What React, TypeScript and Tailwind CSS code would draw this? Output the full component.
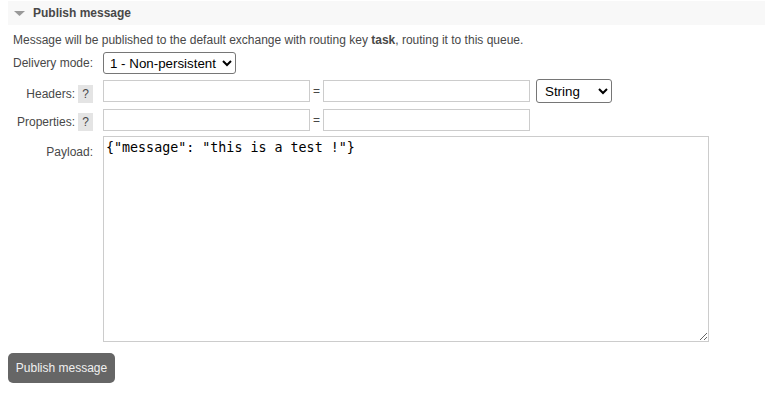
import React from "react";

const font = { fontFamily: '"Liberation Sans", Arial, sans-serif' };

function Help() {
  return (
    <span className="ml-[3px] inline-flex h-[18px] w-[15px] items-center justify-center bg-[#e4e4e4] text-[12px] text-[#484848]">
      ?
    </span>
  );
}

export default function App() {
  return (
    <div className="bg-white pt-px text-[12px] text-[#484848]" style={font}>
      <div className="ml-2 flex h-6 items-center bg-[#f8f8f8]">
        <svg width="11" height="5" viewBox="0 0 11 5" className="ml-[6px]">
          <path d="M0 0h11L5.5 5z" fill="#999" />
        </svg>
        <span className="ml-[8px] font-bold text-[12px]">Publish message</span>
      </div>

      <p className="ml-[13px] mt-[8px] leading-[14px]">
        Message will be published to the default exchange with routing key <b>task</b>, routing it to this queue.
      </p>

      <div className="mt-[5px] grid grid-cols-[93px_auto] items-start gap-x-[10px]">
        <div className="flex h-[22px] items-center justify-end">Delivery mode:</div>
        <div>
          <select className="h-[22px] w-[133px] rounded-[3px] border border-[#767676] bg-white px-[2px] text-[13.333px] text-black">
            <option>1 - Non-persistent</option>
            <option>2 - Persistent</option>
          </select>
        </div>

        <div className="mt-[5px] flex h-[24px] items-center justify-end pt-[5px]">
          Headers:
          <Help />
        </div>
        <div className="mt-[5px] flex h-[24px] items-center">
          <input className="h-[22px] w-[207px] border border-[#ccc] bg-white" />
          <span className="mx-[3px] w-[7px] text-center">=</span>
          <input className="h-[22px] w-[207px] border border-[#ccc] bg-white" />
          <select className="ml-[6px] h-[24px] w-[76px] rounded-[3px] border border-[#767676] bg-white px-[4px] text-[13.333px] text-black">
            <option>String</option>
            <option>Number</option>
            <option>Boolean</option>
          </select>
        </div>

        <div className="mt-[6px] flex h-[22px] items-center justify-end pt-[4px]">
          Properties:
          <Help />
        </div>
        <div className="mt-[6px] flex h-[22px] items-center">
          <input className="h-[22px] w-[207px] border border-[#ccc] bg-white" />
          <span className="mx-[3px] w-[7px] text-center">=</span>
          <input className="h-[22px] w-[207px] border border-[#ccc] bg-white" />
        </div>

        <div className="mt-[5px] pt-[7px] text-right">Payload:</div>
        <div className="mt-[5px]">
          <textarea
            className="block h-[206px] w-[606px] border border-[#ccc] bg-white px-[2px] py-[1px] text-[13.333px] text-black"
            style={{ fontFamily: '"DejaVu Sans Mono", monospace' }}
            defaultValue={'{"message": "this is a test !"}'}
          />
        </div>
      </div>

      <button className="ml-2 mt-[11px] h-[30px] w-[107px] rounded-[5px] bg-[#666] text-[12px] text-[#f0f0f0]">
        Publish message
      </button>
    </div>
  );
}
